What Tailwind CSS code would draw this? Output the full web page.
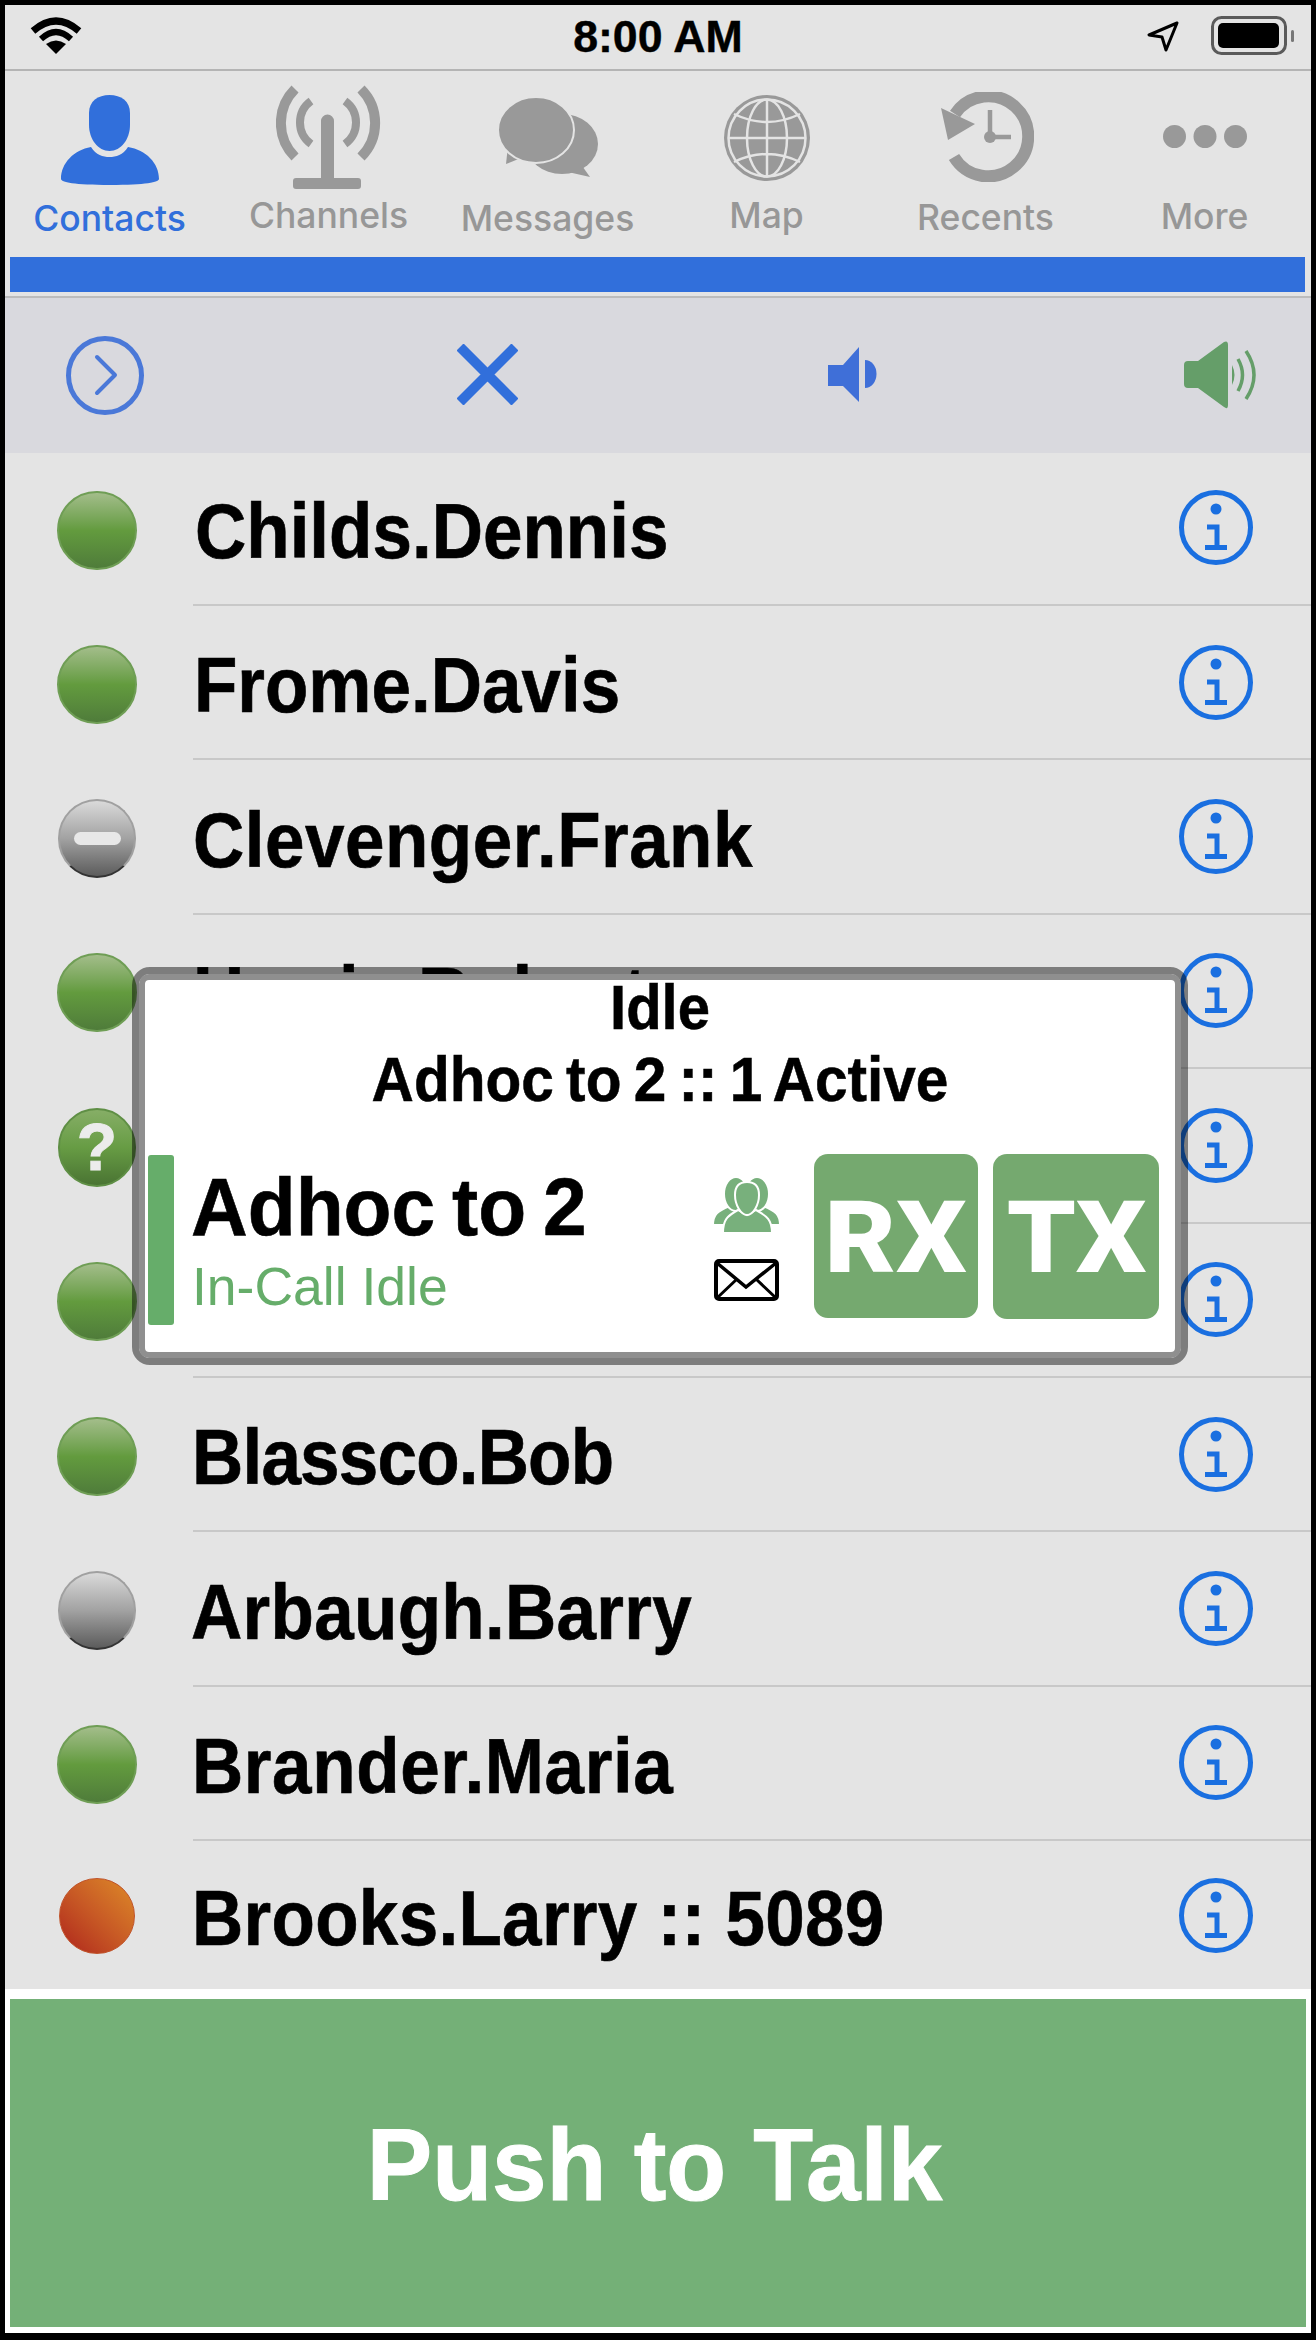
<!DOCTYPE html>
<html lang="en">
<head>
    <meta charset="UTF-8">
    <meta name="viewport" content="width=device-width, initial-scale=1.0">
    <title>Push to Talk Contacts</title>
    <script src="https://cdn.jsdelivr.net/npm/@tailwindcss/browser@4"></script>
</head>
<body class="bg-black">
    <!-- shared info icon -->
    <svg class="hidden">
        <symbol id="info" viewBox="0 0 74 75">
            <ellipse cx="37" cy="37.5" rx="34.5" ry="35" fill="none" stroke="#1a6fe0" stroke-width="5"/>
            <circle cx="37" cy="19" r="5.5" fill="#1a6fe0"/>
            <path d="M28 37H38V57M26 57.500H48" fill="none" stroke="#1a6fe0" stroke-width="5"/>
        </symbol>
    </svg>

    <div class="relative w-[1316px] h-[2340px] border-[5px] border-b-[7px] border-black bg-[#e4e4e4] flex flex-col overflow-hidden [font-family:'Liberation_Sans',sans-serif]">

        <!-- Status bar -->
        <div class="h-[66px] shrink-0 grid grid-cols-3 items-center border-b-2 border-[#b4b4b4]">
            <div class="pl-[25px]">
                <svg width="52" height="38" viewBox="0 0 52 38" class="-mt-[4px]">
                    <path d="M3 15Q26 -5 49 15" fill="none" stroke="#000" stroke-width="7"/>
                    <path d="M11 23Q26 9 41 23" fill="none" stroke="#000" stroke-width="6"/>
                    <path d="M26 38L16 28Q26 21 36 28Z" fill="#000"/>
                </svg>
            </div>
            <div class="text-center text-[44.7px] leading-[64px] font-bold text-black [-webkit-text-stroke:0.4px_#000]">8:00 AM</div>
            <div class="flex items-center justify-end pr-[17px]">
                <svg width="32" height="31" viewBox="0 0 32 31" class="mr-[32px] -mt-[2px]">
                    <path d="M30 2L2 14L15 16L19 29Z" fill="none" stroke="#000" stroke-width="3" stroke-linejoin="round"/>
                </svg>
                <svg width="83" height="39" viewBox="0 0 83 39" class="-mt-[3px]">
                    <rect x="1.5" y="1.5" width="73" height="36" rx="9" fill="none" stroke="#5a5a5a" stroke-width="3"/>
                    <rect x="7" y="7" width="61" height="25" rx="5" fill="#000"/>
                    <rect x="80" y="14" width="3" height="12" rx="1.500" fill="#777"/>
                </svg>
            </div>
        </div>

        <!-- Tabs -->
        <div class="-ml-[5px] w-[1314px] h-[186px] shrink-0 grid grid-cols-6 text-[35.5px] leading-[40px] font-medium text-[#979797] [font-family:Inter,sans-serif]">
            <div class="flex flex-col items-center text-[#316fdb]">
                <svg width="98" height="90" viewBox="0 0 98 90" class="mt-[24px]" fill="#316fdb">
                    <path d="M48.500 0C60 0 69 6 69 18V30C69 44 60 56 48.500 56C37 56 28 44 28 30V18C28 6 37 0 48.500 0Z"/>
                    <path d="M30 52C35 60 42 62 48.500 62C55 62 62 60 67 52C85 55 98 68 98 84C98 87 85 90 49 90C13 90 0 87 0 84C0 68 13 55 30 52Z"/>
                </svg>
                <span class="mt-[14px]">Contacts</span>
            </div>
            <div class="flex flex-col items-center">
                <svg width="105" height="105" viewBox="0 0 105 105" class="mt-[13px]" fill="none" stroke="#999">
                    <path d="M19 5A48 48 0 0 0 19 73M85 5A48 48 0 0 1 85 73" stroke-width="10"/>
                    <path d="M35 17A26.500 26.500 0 0 0 35 60M69 17A26.500 26.500 0 0 1 69 60" stroke-width="8"/>
                    <path d="M45 96V37A6.500 6.500 0 0 1 58 37V96Z" fill="#999" stroke="none"/>
                    <rect x="17" y="94" width="68" height="11" rx="3" fill="#999" stroke="none"/>
                </svg>
                <span class="mt-[7px]">Channels</span>
            </div>
            <div class="flex flex-col items-center">
                <svg width="100" height="79" viewBox="0 0 100 79" class="mt-[27px]" fill="#999">
                    <ellipse cx="64" cy="46" rx="36" ry="30"/>
                    <path d="M82 65L92 79L70 74Z"/>
                    <path d="M10 48L8 66L28 58Z"/>
                    <ellipse cx="38" cy="32" rx="38" ry="33" stroke="#e4e4e4" stroke-width="2"/>
                </svg>
                <span class="mt-[22px]">Messages</span>
            </div>
            <div class="flex flex-col items-center">
                <svg width="86" height="86" viewBox="0 0 86 86" class="mt-[24px]">
                    <ellipse cx="43" cy="43" rx="43" ry="43" fill="#999"/>
                    <g fill="none" stroke="#e4e4e4" stroke-width="2.500">
                        <circle cx="43" cy="43" r="38.500"/>
                        <ellipse cx="43" cy="43" rx="20" ry="38.500"/>
                        <path d="M43 4V82M4 43H82M10 19Q43 35 76 19M10 67Q43 51 76 67"/>
                    </g>
                </svg>
                <span class="mt-[15px]">Map</span>
            </div>
            <div class="flex flex-col items-center">
                <svg width="93" height="90" viewBox="0 0 93 90" class="mt-[21px] ml-[4px]" fill="none" stroke="#999">
                    <path d="M14 22A40 40 0 1 1 13 65" stroke-width="12"/>
                    <path d="M0 16L34 32L7 48Z" fill="#999" stroke="none"/>
                    <path d="M49 18V45H70" stroke-width="4.500"/>
                    <circle cx="49" cy="45" r="6" fill="#999" stroke="none"/>
                </svg>
                <span class="mt-[16px]">Recents</span>
            </div>
            <div class="flex flex-col items-center">
                <svg width="84" height="23" viewBox="0 0 84 23" class="mt-[54px]" fill="#999">
                    <ellipse cx="11.500" cy="11.500" rx="11.500" ry="11.500"/>
                    <ellipse cx="42" cy="11.500" rx="11.500" ry="11.500"/>
                    <ellipse cx="72.500" cy="11.500" rx="11.500" ry="11.500"/>
                </svg>
                <span class="mt-[49px]">More</span>
            </div>
        </div>

        <!-- Selected tab bar -->
        <div class="h-[35px] shrink-0 ml-[5px] mr-[6px] bg-[#316fdb]"></div>
        <div class="h-[6px] shrink-0 border-b-2 border-[#bcbcbc]"></div>

        <!-- Toolbar -->
        <div class="h-[155px] shrink-0 bg-[#d9d9de] flex items-center">
            <svg width="78" height="79" viewBox="0 0 78 79" class="ml-[61px]">
                <ellipse cx="39" cy="39.500" rx="36.500" ry="37" fill="none" stroke="#4a78d8" stroke-width="5"/>
                <path d="M31 21L49 39L31 57" fill="none" stroke="#4a78d8" stroke-width="4" stroke-linecap="round" stroke-linejoin="round"/>
            </svg>
            <svg width="61" height="61" viewBox="0 0 61 61" class="ml-[313px] -mt-[2px]">
                <path d="M3 3L58 58M58 3L3 58" stroke="#316fdb" stroke-width="10"/>
            </svg>
            <svg width="49" height="55" viewBox="0 0 49 55" class="ml-[310px] -mt-[2px]" fill="#3f6fd8">
                <path d="M0 18H15L31 0V55L15 39H0Z"/>
                <path d="M37 13A11.500 14 0 0 1 37 41Z"/>
            </svg>
            <svg width="75" height="68" viewBox="0 0 75 68" class="ml-[307px] -mt-[2px]">
                <path d="M0 24Q0 20 4 20H14L40 1Q44 -1 44 4V64Q44 69 40 66L14 47H4Q0 47 0 43Z" fill="#659e69"/>
                <path d="M48 24Q53 34 48 44Z" fill="#659e69"/>
                <path d="M54 18Q63 34 54 50M62 10Q78 34 62 58" fill="none" stroke="#659e69" stroke-width="3.500"/>
            </svg>
        </div>

        <!-- Contact rows -->
        <div class="shrink-0">
            <div class="h-[153px] flex">
                <div class="w-[136px] shrink-0 pl-[52px] pt-[2px] flex items-center">
                    <div class="w-[80px] h-[79px] rounded-full border-2 border-[#6f9e55] bg-linear-to-b from-[#a3bd8a] via-[#639b3e] to-[#4f7c3a]"></div>
                </div>
                <div class="flex-1 flex items-center justify-between pr-[58px] border-b-2 border-[#c8c8c8] ml-[52px]">
                    <span class="pt-[6px] ml-[2px] text-[71px] font-bold text-black scale-y-110 [-webkit-text-stroke:0.6px_#000]">Childs.Dennis</span>
                    <svg width="74" height="75" class="-mt-[2px]"><use href="#info"/></svg>
                </div>
            </div>
            <div class="h-[154.4px] flex">
                <div class="w-[136px] shrink-0 pl-[52px] pt-[2px] flex items-center">
                    <div class="w-[80px] h-[79px] rounded-full border-2 border-[#6f9e55] bg-linear-to-b from-[#a3bd8a] via-[#639b3e] to-[#4f7c3a]"></div>
                </div>
                <div class="flex-1 flex items-center justify-between pr-[58px] border-b-2 border-[#c8c8c8] ml-[52px]">
                    <span class="pt-[7px] ml-[1px] text-[71px] font-bold text-black scale-y-110 [-webkit-text-stroke:0.6px_#000]">Frome.Davis</span>
                    <svg width="74" height="75"><use href="#info"/></svg>
                </div>
            </div>
            <div class="h-[154.4px] flex">
                <div class="w-[136px] shrink-0 pl-[52px] pt-[2px] flex items-center">
                    <div class="relative w-[78px] h-[79px] ml-[1px] rounded-full border-2 border-[#a0a0a0] border-b-[#333] bg-linear-to-b from-[#dadada] via-[#a2a2a2] to-[#5c5c5c] flex items-center justify-center">
                        <div class="w-[47px] h-[13px] rounded-full bg-[#e8e8e8]"></div>
                    </div>
                </div>
                <div class="flex-1 flex items-center justify-between pr-[58px] border-b-2 border-[#c8c8c8] ml-[52px]">
                    <span class="pt-[7px] ml-[0px] tracking-[0.5px] text-[71px] font-bold text-black scale-y-110 [-webkit-text-stroke:0.6px_#000]">Clevenger.Frank</span>
                    <svg width="74" height="75"><use href="#info"/></svg>
                </div>
            </div>
            <div class="h-[154.4px] flex">
                <div class="w-[136px] shrink-0 pl-[52px] pt-[2px] flex items-center">
                    <div class="w-[80px] h-[79px] rounded-full border-2 border-[#6f9e55] bg-linear-to-b from-[#a3bd8a] via-[#639b3e] to-[#4f7c3a]"></div>
                </div>
                <div class="flex-1 flex items-center justify-between pr-[58px] border-b-2 border-[#c8c8c8] ml-[52px]">
                    <span class="pt-[7px] text-[71px] font-bold text-black scale-y-110 [-webkit-text-stroke:0.6px_#000]">Harris.Robert</span>
                    <svg width="74" height="75"><use href="#info"/></svg>
                </div>
            </div>
            <div class="h-[154.4px] flex">
                <div class="w-[136px] shrink-0 pl-[53px] pt-[2px] flex items-center">
                    <div class="w-[78px] h-[79px] rounded-full border-2 border-[#5f8f45] bg-linear-to-b from-[#86ae66] via-[#679c44] to-[#4a7433] flex items-center justify-center text-[66px] font-bold text-[#ececec] [-webkit-text-stroke:1px_#ececec]">?</div>
                </div>
                <div class="flex-1 flex items-center justify-end pr-[58px] border-b-2 border-[#c8c8c8] ml-[52px]">
                    <svg width="74" height="75"><use href="#info"/></svg>
                </div>
            </div>
            <div class="h-[154.4px] flex">
                <div class="w-[136px] shrink-0 pl-[52px] pt-[2px] flex items-center">
                    <div class="w-[80px] h-[79px] rounded-full border-2 border-[#6f9e55] bg-linear-to-b from-[#a3bd8a] via-[#639b3e] to-[#4f7c3a]"></div>
                </div>
                <div class="flex-1 flex items-center justify-end pr-[58px] border-b-2 border-[#c8c8c8] ml-[52px]">
                    <svg width="74" height="75"><use href="#info"/></svg>
                </div>
            </div>
            <div class="h-[154.4px] flex">
                <div class="w-[136px] shrink-0 pl-[52px] pt-[2px] flex items-center">
                    <div class="w-[80px] h-[79px] rounded-full border-2 border-[#6f9e55] bg-linear-to-b from-[#a3bd8a] via-[#639b3e] to-[#4f7c3a]"></div>
                </div>
                <div class="flex-1 flex items-center justify-between pr-[58px] border-b-2 border-[#c8c8c8] ml-[52px]">
                    <span class="pt-[7px] -ml-[1px] tracking-[-0.8px] text-[71px] font-bold text-black scale-y-110 [-webkit-text-stroke:0.6px_#000]">Blassco.Bob</span>
                    <svg width="74" height="75"><use href="#info"/></svg>
                </div>
            </div>
            <div class="h-[154.4px] flex">
                <div class="w-[136px] shrink-0 pl-[53px] pt-[2px] flex items-center">
                    <div class="w-[78px] h-[79px] rounded-full border-2 border-[#a0a0a0] border-b-[#333] bg-linear-to-b from-[#dadada] via-[#a2a2a2] to-[#5c5c5c]"></div>
                </div>
                <div class="flex-1 flex items-center justify-between pr-[58px] border-b-2 border-[#c8c8c8] ml-[52px]">
                    <span class="pt-[7px] -ml-[2px] tracking-[0.3px] text-[71px] font-bold text-black scale-y-110 [-webkit-text-stroke:0.6px_#000]">Arbaugh.Barry</span>
                    <svg width="74" height="75"><use href="#info"/></svg>
                </div>
            </div>
            <div class="h-[154.4px] flex">
                <div class="w-[136px] shrink-0 pl-[52px] pt-[2px] flex items-center">
                    <div class="w-[80px] h-[79px] rounded-full border-2 border-[#6f9e55] bg-linear-to-b from-[#a3bd8a] via-[#639b3e] to-[#4f7c3a]"></div>
                </div>
                <div class="flex-1 flex items-center justify-between pr-[58px] border-b-2 border-[#c8c8c8] ml-[52px]">
                    <span class="pt-[7px] -ml-[1px] tracking-[0.6px] text-[71px] font-bold text-black scale-y-110 [-webkit-text-stroke:0.6px_#000]">Brander.Maria</span>
                    <svg width="74" height="75"><use href="#info"/></svg>
                </div>
            </div>
            <div class="h-[148px] flex">
                <div class="w-[136px] shrink-0 pl-[54px] pt-[2px] flex items-center">
                    <div class="w-[76px] h-[76px] rounded-full border border-[#c0532a] bg-linear-to-bl from-[#dd8a28] via-[#c85a25] to-[#ae1f1c]"></div>
                </div>
                <div class="flex-1 flex items-center justify-between pr-[58px] ml-[52px]">
                    <span class="pt-[6px] -ml-[1px] tracking-[0.3px] text-[71px] font-bold text-black scale-y-110 [-webkit-text-stroke:0.6px_#000]">Brooks.Larry :: 5089</span>
                    <svg width="74" height="75"><use href="#info"/></svg>
                </div>
            </div>
        </div>

        <!-- Push to talk -->
        <div class="flex-1 bg-white pt-[10px] pb-[6px] pl-[5px] pr-[5px] flex">
            <button class="flex-1 bg-[#74b077] text-white text-[98px] font-bold flex items-center justify-center"><span class="-ml-[7px] pt-[2px] scale-y-105 [-webkit-text-stroke:1px_#fff]">Push to Talk</span></button>
        </div>

        <!-- Call popup, lies over the list: see-through outer rim, solid inner rim -->
        <div class="absolute left-[127px] top-[962px] w-[1056px] h-[398px] rounded-[18px] border-[7px] border-black/45 bg-clip-padding">
            <div class="h-full rounded-[10px] border-[6px] border-[#8f8f8f] bg-white bg-clip-padding">
                <div class="pt-[2px] text-center text-[58px] leading-[50px] font-bold text-black scale-y-108 [-webkit-text-stroke:0.5px_#000]">Idle</div>
                <div class="mt-[12px] text-center text-[58.6px] leading-[70px] [word-spacing:-4px] font-bold text-black scale-y-108 [-webkit-text-stroke:0.5px_#000]">Adhoc to 2 :: 1 Active</div>
                <div class="mt-[41px] pl-[3px] pr-[16px] h-[170px] flex">
                    <div class="w-[26px] h-[170px] rounded-[3px] bg-[#66ad6a]"></div>
                    <div class="ml-[17px] flex flex-col">
                        <span class="mt-[12px] text-[78.5px] leading-[84px] [word-spacing:-5px] font-bold text-black scale-y-105 origin-bottom [-webkit-text-stroke:0.6px_#000]">Adhoc to 2</span>
                        <span class="mt-[6px] ml-[1px] text-[53.5px] leading-[60px] text-[#66ad6a]">In-Call Idle</span>
                    </div>
                    <div class="ml-auto mr-[33px] w-[69px] flex flex-col items-center">
                        <svg width="69" height="56" viewBox="0 0 69 56" class="mt-[22px]" fill="#78b07c" stroke="#fff" stroke-width="2">
                            <path d="M1 48C1 38 5 34 18 29L34 34V48Z"/>
                            <path d="M68 48C68 38 64 34 51 29L35 34V48Z"/>
                            <ellipse cx="24" cy="17" rx="12" ry="17"/>
                            <ellipse cx="45" cy="17" rx="12" ry="17"/>
                            <path d="M11 56C11 43 15 39 26 33L35 38L44 33C55 39 60 43 60 56Z"/>
                            <path d="M35 5C43 5 47 10 47 18C47 28 41 38 35 38C29 38 23 28 23 18C23 10 27 5 35 5Z"/>
                        </svg>
                        <svg width="65" height="42" viewBox="0 0 65 42" class="mt-[26px]" fill="none" stroke="#000">
                            <rect x="2" y="2" width="61" height="38" rx="3" stroke-width="4"/>
                            <path d="M3 4L32 28L62 4" stroke-width="3.500"/>
                            <path d="M3 39L23 20M62 39L42 20" stroke-width="3"/>
                        </svg>
                    </div>
                    <div class="-mt-[1px] w-[164px] h-[164px] rounded-[14px] bg-[#75a96f] text-white text-[100px] font-black flex items-center justify-center [font-family:Roboto,sans-serif]"><span class="pt-[3px] scale-x-110">RX</span></div>
                    <div class="-mt-[1px] ml-[15px] w-[166px] h-[165px] rounded-[14px] bg-[#75a96f] text-white text-[100px] font-black flex items-center justify-center [font-family:Roboto,sans-serif]"><span class="pt-[3px] scale-x-110">TX</span></div>
                </div>
            </div>
        </div>
    </div>
</body>
</html>
